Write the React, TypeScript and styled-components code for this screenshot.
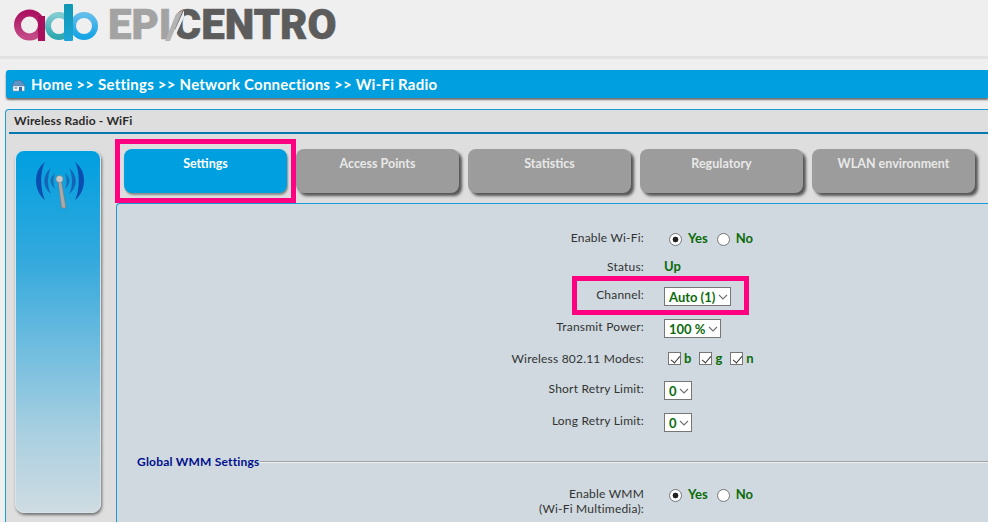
import React from "react";
import styled, { createGlobalStyle } from "styled-components";

const GlobalStyle = createGlobalStyle`
  html, body {
    margin: 0;
    padding: 0;
    background: #efefef;
  }
  body {
    font-family: "Lato", "Open Sans", sans-serif;
    overflow: hidden;
  }
`;

const chevron =
  "url(\"data:image/svg+xml,%3Csvg xmlns='http://www.w3.org/2000/svg' width='10' height='6' viewBox='0 0 10 6'%3E%3Cpath d='M1 1l4 4 4-4' fill='none' stroke='%23707070' stroke-width='1.1'/%3E%3C/svg%3E\")";

const Page = styled.div`
  width: 988px;
  height: 522px;
  overflow: hidden;
  display: flex;
  flex-direction: column;
  position: relative;
`;

const Header = styled.header`
  height: 52px;
  flex: none;
  display: flex;
  align-items: flex-start;
  padding: 4px 0 0 13px;
  border-bottom: 3px solid #e2e2e2;
`;

const LogoText = styled.div`
  display: flex;
  align-items: flex-start;
  margin-left: 9px;
  font-family: "Roboto", sans-serif;
  font-size: 42px;
  line-height: 42px;
  font-weight: 900;
  letter-spacing: 0;
  -webkit-text-stroke: 0.6px currentColor;
`;

const LogoLight = styled.span`
  color: #a3a3a3;
`;

const LogoDark = styled.span`
  color: #5c5c5c;
`;

const SlashMark = styled.svg`
  position: relative;
  z-index: 1;
  margin: 5px -10px 0 -7px;
  flex: none;
`;

const Breadcrumb = styled.nav`
  margin: 11px 0 0 6px;
  height: 28px;
  flex: none;
  background: #009fe0;
  border-radius: 3px 0 0 3px;
  box-shadow: 0 2px 2px #6f6f6f;
  display: flex;
  align-items: center;
  padding-left: 5px;
  gap: 5px;
  color: #ffffff;
  font-size: 15px;
  font-weight: 700;
  letter-spacing: 0.23px;
`;

const Panel = styled.section`
  margin: 11px 0 0 5px;
  flex: 1;
  background: #dedede;
  border-left: 1px solid #1a9ad6;
  border-top: 1px solid #1a9ad6;
  border-radius: 4px 0 0 0;
  display: flex;
  flex-direction: column;
`;

const PanelTitle = styled.h2`
  margin: 0 0 0 3px;
  height: 19px;
  flex: none;
  border-bottom: 2px solid #0a78b0;
  padding: 3px 0 0 5px;
  font-size: 12px;
  line-height: 15px;
  font-weight: 700;
  letter-spacing: 0.15px;
  color: #2a2a2a;
`;

const PanelBody = styled.div`
  display: flex;
  flex: 1;
  min-height: 0;
`;

const SideCard = styled.aside`
  margin: 16px 0 9px 9px;
  width: 86px;
  flex: none;
  box-sizing: border-box;
  border-radius: 9px;
  border: 1px solid #d8e4ea;
  background: linear-gradient(180deg, #009fe0 0%, #33a9dd 30%, #a9cfe0 78%, #cfdce2 100%);
  box-shadow: 1px 2px 3px #6f6f6f;
  display: flex;
  justify-content: center;
  align-items: flex-start;
  padding: 10px 0 0 4px;
`;

const Main = styled.div`
  flex: 1;
  min-width: 0;
  margin-left: 15px;
  display: flex;
  flex-direction: column;
`;

const Tabs = styled.div`
  display: flex;
  gap: 9px;
  padding: 15px 0 0 8px;
  height: 44px;
  flex: none;
  margin-bottom: 10px;
`;

const Tab = styled.div<{ $active?: boolean }>`
  width: 163px;
  height: 44px;
  box-sizing: border-box;
  border-radius: 8px;
  padding-top: 7px;
  text-align: center;
  font-size: 12.5px;
  line-height: 16px;
  font-weight: 700;
  color: ${(p) => (p.$active ? "#ffffff" : "#e8e8e8")};
  background: ${(p) => (p.$active ? "#009fe0" : "#9b9c9b")};
  box-shadow: ${(p) => (p.$active ? "1px 2px 2px #8a8a8a" : "3px 3px 3px #555555")};
`;

const Content = styled.div`
  flex: 1;
  background: #cfd9df;
  border-left: 1px solid #1a9ad6;
  border-top: 1px solid #1a9ad6;
  border-radius: 4px 0 0 0;
  padding-top: 26px;
`;

const Row = styled.div<{ $gap: number }>`
  display: flex;
  align-items: flex-start;
  margin-bottom: ${(p) => p.$gap}px;
`;

const Label = styled.label`
  width: 527px;
  flex: none;
  text-align: right;
  font-size: 12px;
  line-height: 15px;
  color: #333333;
  letter-spacing: 0.2px;
`;

const Value = styled.div`
  margin-left: 20px;
  display: flex;
  align-items: center;
  color: #0b6b0b;
  font-size: 13px;
  line-height: 15px;
  font-weight: 700;
`;

const Radio = styled.input.attrs({ type: "radio" })`
  appearance: none;
  box-sizing: border-box;
  margin: 3px 6px 0 5px;
  width: 13px;
  height: 13px;
  border: 1px solid #767676;
  border-radius: 50%;
  background: #ffffff;

  &:checked {
    background: radial-gradient(circle, #222222 0 2.6px, #ffffff 3.2px);
  }
`;

const RadioNo = styled(Radio)`
  margin-left: 9px;
`;

const Check = styled.input.attrs({ type: "checkbox" })`
  appearance: none;
  box-sizing: border-box;
  position: relative;
  margin: 0 3px 0 4px;
  width: 13px;
  height: 13px;
  border: 1px solid #767676;
  background: #ffffff;

  &:checked::after {
    content: "";
    position: absolute;
    left: 3.5px;
    top: 0.5px;
    width: 4px;
    height: 8px;
    border: solid #333333;
    border-width: 0 1.2px 1.2px 0;
    transform: rotate(40deg);
  }
`;

const ModeName = styled.span`
  margin-right: 4px;
`;

const Select = styled.select`
  appearance: none;
  font-family: "Lato", "Open Sans", sans-serif;
  font-size: 13px;
  font-weight: 700;
  color: #0b6b0b;
  height: 19px;
  background: #ffffff ${chevron} no-repeat right 2px center;
  border: 1px solid #767676;
  border-radius: 0;
  padding: 0 14px 0 4px;
  margin: 0;
`;

const SectionTitle = styled.div`
  display: flex;
  align-items: center;
  margin: 0 0 17px 20px;
  font-size: 12px;
  line-height: 15px;
  font-weight: 700;
  color: #000f8c;
  letter-spacing: 0.2px;

  &::after {
    content: "";
    flex: 1;
    border-top: 1px solid #a0a0a0;
    border-bottom: 1px solid #f2f2f2;
  }
`;

const Highlight = styled.div`
  position: absolute;
  box-sizing: border-box;
  border: 5px solid #ff0080;
  pointer-events: none;
`;

const TabHighlight = styled(Highlight)`
  left: 115px;
  top: 139px;
  width: 181px;
  height: 64px;
`;

const ChannelHighlight = styled(Highlight)`
  left: 572px;
  top: 276px;
  width: 177px;
  height: 39px;
`;

function AdbLogo() {
  return (
    <svg width="86" height="38" viewBox="0 0 86 38" fill="none">
      <defs>
        <linearGradient id="adbMagenta" x1="0" x2="0" y1="0" y2="1">
          <stop offset="0" stopColor="#ac1261" />
          <stop offset="1" stopColor="#c44a86" />
        </linearGradient>
        <linearGradient id="adbTeal" x1="0" x2="0" y1="0" y2="1">
          <stop offset="0" stopColor="#7fcbd0" />
          <stop offset="1" stopColor="#2fa8b0" />
        </linearGradient>
        <linearGradient id="adbBlue" x1="0" x2="0" y1="0" y2="1">
          <stop offset="0" stopColor="#62bdea" />
          <stop offset="1" stopColor="#16a5e4" />
        </linearGradient>
        <linearGradient id="adbStem" x1="0" x2="0" y1="0" y2="1">
          <stop offset="0" stopColor="#0e97b4" />
          <stop offset="1" stopColor="#1ba6d6" />
        </linearGradient>
      </defs>
      <circle cx="16.5" cy="21" r="12" stroke="url(#adbMagenta)" strokeWidth="7" />
      <rect x="25" y="12" width="7" height="25" fill="#a80f5c" />
      <circle cx="46" cy="22" r="11" stroke="url(#adbTeal)" strokeWidth="6" />
      <circle cx="71" cy="22" r="11" stroke="url(#adbBlue)" strokeWidth="6" />
      <rect x="51" y="0" width="9" height="37" rx="1" fill="url(#adbStem)" />
    </svg>
  );
}

function LogoSlash() {
  return (
    <SlashMark width="19" height="32" viewBox="0 0 19 32">
      <path d="M19 1 L5 32 L8 32 L19 8 Z" fill="#efefef" />
      <path d="M18 1 L11 5 L0 32 L5 32 Z" fill="#b4b4b4" />
    </SlashMark>
  );
}

function HomeIcon() {
  return (
    <svg width="15" height="15" viewBox="0 0 15 15">
      <path d="M0.5 9 L4 3.5 L10 3.5 L14.5 9 Z" fill="#5f93c8" stroke="#47698c" strokeWidth="0.5" />
      <rect x="2" y="9" width="11.5" height="5" fill="#f4f6f8" stroke="#7f93a5" strokeWidth="0.5" />
      <rect x="8" y="10" width="3" height="4" fill="#2f6fb0" />
      <rect x="3.5" y="10" width="2.6" height="2" fill="#8fb0d0" />
    </svg>
  );
}

function AntennaIcon() {
  return (
    <svg width="48" height="48" viewBox="0 0 48 48">
      <path d="M9 1 C-3 10 -3 29 9 39 C4 29 4 10 9 1 Z" fill="#0a4fb0" />
      <path d="M39 1 C51 10 51 29 39 39 C44 29 44 10 39 1 Z" fill="#0a4fb0" />
      <path d="M15 7 C6 14 6 26 15 33 C11 26 11 14 15 7 Z" fill="#1464b8" />
      <path d="M33 7 C42 14 42 26 33 33 C37 26 37 14 33 7 Z" fill="#1464b8" />
      <path d="M19 12 C13 17 13 23 19 28 C17 23 17 17 19 12 Z" fill="#1a70b8" />
      <path d="M29 12 C35 17 35 23 29 28 C31 23 31 17 29 12 Z" fill="#1a70b8" />
      <path d="M22 20 L25.5 20 L30 47 L25.5 47 Z" fill="#a9a9a9" stroke="#6f6f6f" strokeWidth="0.5" />
      <circle cx="23.5" cy="18" r="3.6" fill="#c8c8c8" stroke="#6f6f6f" strokeWidth="0.5" />
    </svg>
  );
}

export default function App() {
  return (
    <Page>
      <GlobalStyle />
      <Header>
        <AdbLogo />
        <LogoText>
          <LogoLight>EPI</LogoLight>
          <LogoSlash />
          <LogoDark>CENTRO</LogoDark>
        </LogoText>
      </Header>
      <Breadcrumb>
        <HomeIcon />
        <span>Home &gt;&gt; Settings &gt;&gt; Network Connections &gt;&gt; Wi-Fi Radio</span>
      </Breadcrumb>
      <Panel>
        <PanelTitle>Wireless Radio - WiFi</PanelTitle>
        <PanelBody>
          <SideCard>
            <AntennaIcon />
          </SideCard>
          <Main>
            <Tabs>
              <Tab $active>Settings</Tab>
              <Tab>Access Points</Tab>
              <Tab>Statistics</Tab>
              <Tab>Regulatory</Tab>
              <Tab>WLAN environment</Tab>
            </Tabs>
            <Content>
              <Row $gap={13}>
                <Label>Enable Wi-Fi:</Label>
                <Value>
                  <Radio name="wifi" defaultChecked />
                  Yes
                  <RadioNo name="wifi" />
                  No
                </Value>
              </Row>
              <Row $gap={13}>
                <Label>Status:</Label>
                <Value>Up</Value>
              </Row>
              <Row $gap={13}>
                <Label>Channel:</Label>
                <Value>
                  <Select defaultValue="auto">
                    <option value="auto">Auto (1)</option>
                  </Select>
                </Value>
              </Row>
              <Row $gap={13}>
                <Label>Transmit Power:</Label>
                <Value>
                  <Select defaultValue="100">
                    <option value="100">100 %</option>
                  </Select>
                </Value>
              </Row>
              <Row $gap={15}>
                <Label>Wireless 802.11 Modes:</Label>
                <Value>
                  <Check defaultChecked />
                  <ModeName>b</ModeName>
                  <Check defaultChecked />
                  <ModeName>g</ModeName>
                  <Check defaultChecked />
                  <ModeName>n</ModeName>
                </Value>
              </Row>
              <Row $gap={13}>
                <Label>Short Retry Limit:</Label>
                <Value>
                  <Select defaultValue="0">
                    <option value="0">0</option>
                  </Select>
                </Value>
              </Row>
              <Row $gap={22}>
                <Label>Long Retry Limit:</Label>
                <Value>
                  <Select defaultValue="0">
                    <option value="0">0</option>
                  </Select>
                </Value>
              </Row>
              <SectionTitle>Global WMM Settings</SectionTitle>
              <Row $gap={0}>
                <Label>
                  Enable WMM
                  <br />
                  (Wi-Fi Multimedia):
                </Label>
                <Value>
                  <Radio name="wmm" defaultChecked />
                  Yes
                  <RadioNo name="wmm" />
                  No
                </Value>
              </Row>
            </Content>
          </Main>
        </PanelBody>
      </Panel>
      <TabHighlight />
      <ChannelHighlight />
    </Page>
  );
}
